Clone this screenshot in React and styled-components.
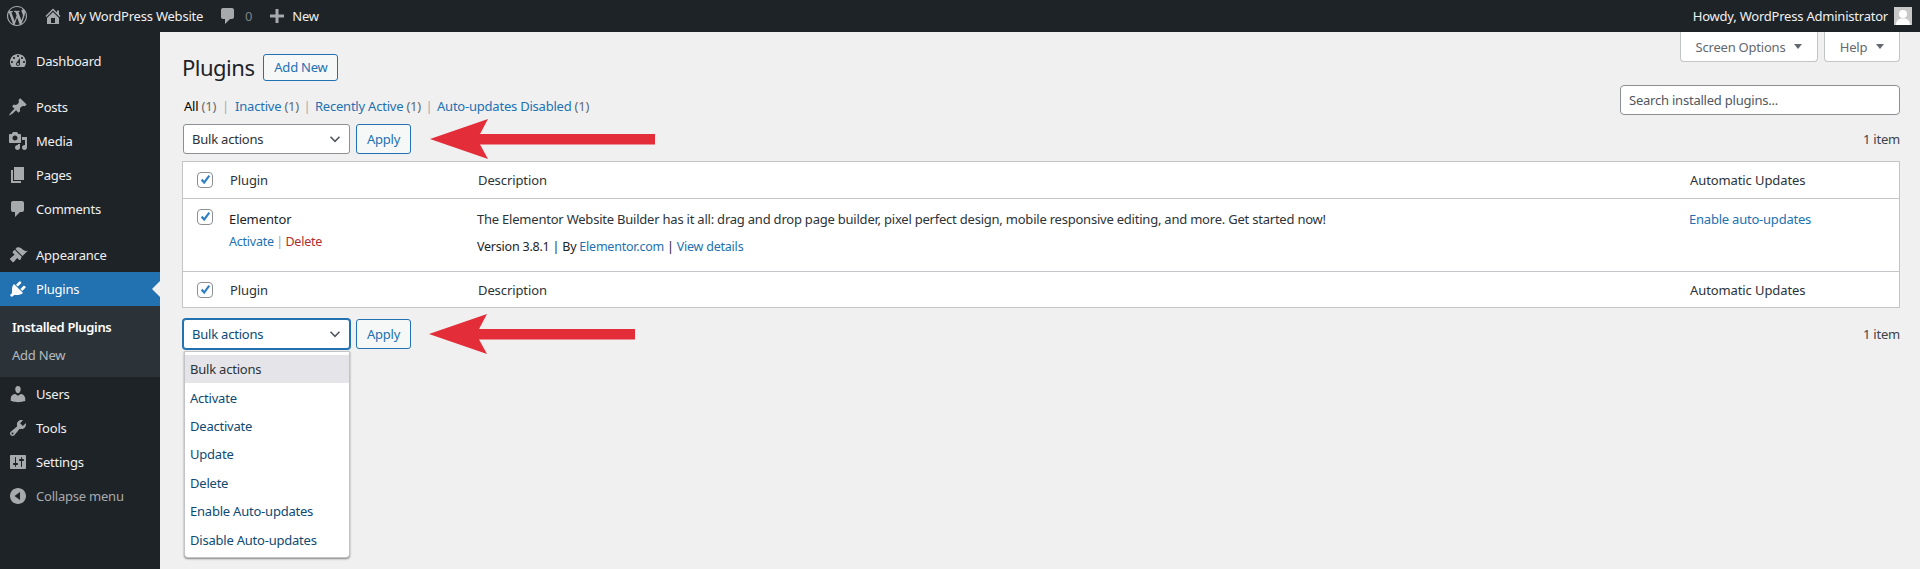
import React from 'react';
import styled, { createGlobalStyle } from 'styled-components';

const GlobalStyle = createGlobalStyle`
	* {
		box-sizing: border-box;
	}
	html, body {
		margin: 0;
		height: 100%;
		background: #f0f0f1;
		overflow: hidden;
	}
	body {
		font-family: "Noto Sans", "Open Sans", sans-serif;
		font-size: 13px;
		letter-spacing: -0.22px;
		color: #3c434a;
	}
`;

const ICONS = {
	wordpress: 'M20 10c0-5.51-4.49-10-10-10C4.48 0 0 4.49 0 10c0 5.52 4.48 10 10 10 5.51 0 10-4.48 10-10zM7.78 15.37L4.37 6.22c.55-.02 1.17-.08 1.17-.08.5-.06.44-1.13-.06-1.11 0 0-1.45.11-2.37.11-.18 0-.37 0-.58-.01C4.12 2.69 6.87 1.11 10 1.11c2.33 0 4.45.87 6.05 2.34-.68-.11-1.65.39-1.65 1.58 0 .74.45 1.36.9 2.1.35.61.55 1.36.55 2.46 0 1.49-1.4 5-1.4 5l-3.03-8.37c.54-.02.82-.17.82-.17.5-.05.44-1.25-.06-1.22 0 0-1.44.12-2.38.12-.87 0-2.33-.12-2.33-.12-.5-.03-.56 1.2-.06 1.22l.92.08 1.26 3.41zM17.41 10c.24-.64.74-1.87.43-4.25.7 1.29 1.05 2.71 1.05 4.25 0 3.29-1.73 6.24-4.4 7.78.97-2.59 1.94-5.2 2.92-7.78zM6.1 18.09C3.12 16.65 1.11 13.53 1.11 10c0-1.3.23-2.48.72-3.59C3.25 10.3 4.67 14.2 6.1 18.09zm4.03-6.63l2.58 6.98c-.86.29-1.76.45-2.71.45-.79 0-1.57-.11-2.29-.33.81-2.38 1.62-4.74 2.42-7.1z',
	home: 'M16 8.5l1.53 1.53-1.06 1.06L10 4.62l-6.47 6.47-1.06-1.06L10 2.5l4 4v-2h2v4zm-6-2.46l6 5.99V18H4v-5.97zM12 17v-5H8v5h4z',
	comment: 'M5 2h9c1.1 0 2 .9 2 2v7c0 1.1-.9 2-2 2h-2l-5 5v-5H5c-1.1 0-2-.9-2-2V4c0-1.1.9-2 2-2z',
	plus: 'M17 8.500v3h-5.500V17h-3v-5.500H3v-3h5.500V3h3v5.500z',
	dashboard: 'M3.76 16h12.48c1.1-1.37 1.76-3.11 1.76-5 0-4.42-3.58-8-8-8s-8 3.58-8 8c0 1.89.66 3.63 1.76 5zM10 4c.55 0 1 .45 1 1s-.45 1-1 1-1-.45-1-1 .45-1 1-1zM6 6c.55 0 1 .45 1 1s-.45 1-1 1-1-.45-1-1 .45-1 1-1zm8 0c.55 0 1 .45 1 1s-.45 1-1 1-1-.45-1-1 .45-1 1-1zm-5.37 5.55L12 7v6c0 1.1-.9 2-2 2s-2-.9-2-2c0-.57.24-1.08.63-1.45zM4 10c.55 0 1 .45 1 1s-.45 1-1 1-1-.45-1-1 .45-1 1-1zm12 0c.55 0 1 .45 1 1s-.45 1-1 1-1-.45-1-1 .45-1 1-1zm-5 3c0-.55-.45-1-1-1s-1 .45-1 1 .45 1 1 1 1-.45 1-1z',
	post: 'M10.44 3.02l1.82-1.82 6.36 6.35-1.83 1.82c-1.05-.68-2.48-.57-3.41.36l-.75.75c-.92.93-1.04 2.35-.35 3.41l-1.83 1.82-2.41-2.41-2.8 2.79c-.42.42-3.38 2.71-3.8 2.29s1.86-3.39 2.28-3.81l2.79-2.79L4.1 9.36l1.83-1.82c1.05.69 2.48.57 3.4-.36l.75-.75c.93-.92 1.05-2.35.36-3.41z',
	media: 'M13 11V4c0-.55-.45-1-1-1h-1.67L9 1H5L3.67 3H2c-.55 0-1 .45-1 1v7c0 .55.45 1 1 1h10c.55 0 1-.45 1-1zM7 4.5c1.38 0 2.5 1.12 2.5 2.5S8.38 9.5 7 9.5 4.5 8.38 4.5 7 5.62 4.5 7 4.5zM14 6h5v10.5c0 1.38-1.12 2.5-2.5 2.5S14 17.88 14 16.5s1.12-2.5 2.5-2.5c.17 0 .34.02.5.05V9h-3V6zm-4 8.05V13h2v3.5c0 1.38-1.12 2.5-2.5 2.5S7 17.88 7 16.5 8.12 14 9.5 14c.17 0 .34.02.5.05z',
	page: 'M6 15V2h10v13H6zm-1 1h8v2H3V5h2v11z',
	appearance: 'M14.48 11.06L7.41 3.99l1.5-1.5c.5-.56 2.3-.47 3.51.32 1.21.8 1.43 1.28 2.91 2.1 1.18.64 2.45 1.26 4.45.85zm-.71.71L6.7 4.7 4.93 6.47c-.39.39-.39 1.02 0 1.41l1.06 1.06c.39.39.39 1.03 0 1.42-.6.6-1.43 1.11-2.21 1.69-.35.26-.7.53-1.01.84C1.43 13.23 1.57 14.49 3 15.5c.99.69 1.74 2.04 1.74 2.04s.98-.38 1.27-.67c.31-.31.58-.66.84-1.01.58-.78 1.09-1.61 1.69-2.21.39-.39 1.02-.39 1.41 0l1.06 1.06c.39.39 1.02.39 1.41 0z',
	plugins: 'M13.11 4.36L9.87 7.6 8 5.73l3.24-3.24c.35-.34 1.05-.2 1.56.32.52.51.66 1.21.31 1.55zm-8 1.77l.91-1.12 9.01 9.01-1.19.84c-.71.71-2.63 1.16-3.82 1.16H6.14L4.9 17.26c-.59.59-1.54.59-2.12 0-.59-.58-.59-1.53 0-2.12l1.24-1.24v-3.88c0-1.13.4-3.19 1.09-3.89zm7.26 3.97l3.24-3.24c.34-.35 1.04-.21 1.55.31.52.51.66 1.21.31 1.55l-3.24 3.25z',
	users: 'M10 9.25c-2.27 0-2.73-3.44-2.73-3.44C7 4.02 7.82 2 9.97 2c2.16 0 2.98 2.02 2.71 3.81 0 0-.41 3.44-2.68 3.44zm0 2.57L12.72 10c2.39 0 4.52 2.33 4.52 4.53v2.49s-3.65 1.13-7.24 1.13c-3.65 0-7.24-1.13-7.24-1.13v-2.49c0-2.25 1.94-4.48 4.47-4.48z',
	tools: 'M16.68 9.77c-1.34 1.34-3.3 1.67-4.95.99l-5.41 6.52c-.99.99-2.59.99-3.58 0s-.99-2.59 0-3.57l6.52-5.42c-.68-1.65-.35-3.61.99-4.95 1.28-1.28 3.12-1.62 4.72-1.06l-2.89 2.89 2.82 2.82 2.86-2.87c.53 1.58.18 3.39-1.08 4.65zM3.81 16.21c.4.39 1.04.39 1.43 0 .4-.4.4-1.04 0-1.43-.39-.4-1.03-.4-1.43 0-.39.39-.39 1.03 0 1.43z',
	settings: 'M18 16V4c0-.55-.45-1-1-1H3c-.55 0-1 .45-1 1v12c0 .55.45 1 1 1h14c.55 0 1-.45 1-1zM8 11h1c.55 0 1 .45 1 1s-.45 1-1 1H8v1.5c0 .28-.22.5-.5.5s-.5-.22-.5-.5V13H6c-.55 0-1-.45-1-1s.45-1 1-1h1V5.5c0-.28.22-.5.5-.5s.5.22.5.5V11zm5-2h-1c-.55 0-1-.45-1-1s.45-1 1-1h1V5.5c0-.28.22-.5.5-.5s.5.22.5.5V7h1c.55 0 1 .45 1 1s-.45 1-1 1h-1v5.5c0 .28-.22.5-.5.5s-.5-.22-.5-.5V9z',
	collapse: 'M10 2c-4.42 0-8 3.58-8 8s3.58 8 8 8 8-3.58 8-8-3.58-8-8-8zm2 4v8L6.5 10z',
};

const Icon = ( { name, size = 20, color } ) => (
	<svg width={ size } height={ size } viewBox="0 0 20 20" fill={ color || 'currentColor' } fillRule="evenodd" style={ { flex: 'none' } }>
		<path d={ ICONS[ name ] } />
	</svg>
);

const Page = styled.div`
	display: flex;
	flex-direction: column;
	height: 569px;
	width: 1920px;
`;

const AdminBar = styled.header`
	display: flex;
	align-items: center;
	height: 32px;
	flex: none;
	background: #1d2327;
	color: #f0f0f1;
	padding: 0 8px 0 7px;
`;

const BarItem = styled.span`
	display: flex;
	align-items: center;
	gap: ${ ( p ) => p.$gap || 7 }px;
	margin-left: ${ ( p ) => p.$left || 0 }px;
	color: #f0f0f1;
	svg {
		color: #a7aaad;
	}
`;

const BarCount = styled.span`
	color: #a7aaad;
	opacity: .7;
`;

const Howdy = styled.span`
	margin-left: auto;
	display: flex;
	align-items: center;
	gap: 6px;
`;

const Avatar = styled.span`
	display: block;
	width: 18px;
	height: 18px;
	background: #c8c8c8;
	overflow: hidden;
	svg {
		display: block;
	}
`;

const Body = styled.div`
	display: flex;
	flex: 1;
	min-height: 0;
`;

const Sidebar = styled.nav`
	width: 160px;
	flex: none;
	background: #1d2327;
	padding-top: 12px;
`;

const MenuItem = styled.div`
	position: relative;
	display: flex;
	align-items: center;
	height: 34px;
	padding-left: 8px;
	gap: 8px;
	margin-top: ${ ( p ) => p.$gap || 0 }px;
	color: ${ ( p ) => ( p.$muted ? '#a7aaad' : '#f0f0f1' ) };
	background: ${ ( p ) => ( p.$active ? '#2271b1' : 'transparent' ) };
	svg {
		color: ${ ( p ) => ( p.$active ? '#fff' : '#a7aaad' ) };
	}
	${ ( p ) => p.$active && `
		color: #fff;
		&::after {
			content: '';
			position: absolute;
			right: 0;
			top: 50%;
			margin-top: -8px;
			border: 8px solid transparent;
			border-right-color: #f0f0f1;
			border-left-width: 0;
		}
	` }
`;

const SubMenu = styled.div`
	background: #2c3338;
	padding: 7px 0 8px;
`;

const SubItem = styled.div`
	display: flex;
	align-items: center;
	height: 28px;
	padding-left: 12px;
	color: ${ ( p ) => ( p.$current ? '#fff' : 'rgba(240,246,252,.7)' ) };
	font-weight: ${ ( p ) => ( p.$current ? 600 : 400 ) };
	letter-spacing: ${ ( p ) => ( p.$current ? '-0.35px' : 'inherit' ) };
`;

const Content = styled.main`
	flex: 1;
	min-width: 0;
	padding: 0 20px 0 22px;
`;

const TopArea = styled.div`
	display: flex;
	justify-content: space-between;
	height: 92px;
`;

const TitleBlock = styled.div`
	padding-top: 21px;
`;

const TitleRow = styled.div`
	display: flex;
	align-items: center;
	gap: 9px;
	height: 28px;
`;

const Heading = styled.h1`
	margin: 0;
	font-size: 22px;
	font-weight: 400;
	line-height: 28px;
	color: #1d2327;
	letter-spacing: -0.5px;
`;

const OutlineButton = styled.button`
	display: inline-flex;
	align-items: center;
	justify-content: center;
	height: ${ ( p ) => p.$height || 30 }px;
	width: ${ ( p ) => p.$width }px;
	padding: 0;
	background: #f6f7f7;
	border: 1px solid #2271b1;
	border-radius: 3px;
	color: #2271b1;
	font: inherit;
	letter-spacing: inherit;
`;

const Filters = styled.div`
	display: flex;
	margin-top: 15px;
	padding-left: 2px;
	line-height: 20px;
	color: #646970;
	white-space: pre;
`;

const FilterCurrent = styled.strong`
	font-weight: 400;
	color: #000;
`;

const Link = styled.span`
	color: ${ ( p ) => p.$color || '#2271b1' };
`;

const Sep = styled.span`
	color: #a7aaad;
	margin: 0 ${ ( p ) => p.$space || 4.5 }px;
`;

const RightBlock = styled.div`
	display: flex;
	flex-direction: column;
	align-items: flex-end;
`;

const TabRow = styled.div`
	display: flex;
	gap: 6px;
`;

const Tab = styled.div`
	display: flex;
	align-items: center;
	justify-content: center;
	gap: 9px;
	height: 30px;
	width: ${ ( p ) => p.$width }px;
	background: #fff;
	border: 1px solid #c3c4c7;
	border-top: 0;
	border-radius: 0 0 4px 4px;
	color: #646970;
`;

const Caret = styled.i`
	display: block;
	border: 4px solid transparent;
	border-top: 5px solid #646970;
	border-bottom: 0;
`;

const SearchInput = styled.div`
	display: flex;
	align-items: center;
	width: 280px;
	height: 30px;
	margin-top: 23px;
	padding-left: 8px;
	background: #fff;
	border: 1px solid #8c8f94;
	border-radius: 4px;
	color: #50575e;
`;

const Toolbar = styled.div`
	position: relative;
	display: flex;
	align-items: center;
	height: 30px;
	padding-left: 1px;
	gap: 6px;
	margin-top: ${ ( p ) => p.$top || 0 }px;
`;

const SelectBox = styled.div`
	display: flex;
	align-items: center;
	justify-content: space-between;
	width: 167px;
	height: 30px;
	padding: 0 8px 0 8px;
	background: #fff;
	border: 1px solid ${ ( p ) => ( p.$focus ? '#2271b1' : '#8c8f94' ) };
	box-shadow: ${ ( p ) => ( p.$focus ? '0 0 0 1px #2271b1' : 'none' ) };
	border-radius: 3px;
	color: ${ ( p ) => ( p.$focus ? '#0a4b78' : '#2c3338' ) };
`;

const Arrow = styled.svg`
	display: block;
	flex: none;
	margin-left: ${ ( p ) => p.$left }px;
`;

const ItemCount = styled.span`
	margin-left: auto;
	color: #3c434a;
`;

const Dropdown = styled.div`
	position: absolute;
	z-index: 2;
	left: 2px;
	top: 32px;
	width: 166px;
	padding: 3px 0 3px;
	background: #fff;
	border: 1px solid #c3c4c7;
	border-radius: 0 0 4px 4px;
	box-shadow: 0 1px 2px rgba(0,0,0,.45);
`;

const DropItem = styled.div`
	display: flex;
	align-items: center;
	height: 28.4px;
	padding-left: 5px;
	background: ${ ( p ) => ( p.$selected ? '#e4e4e9' : 'transparent' ) };
	color: ${ ( p ) => ( p.$selected ? '#2c3338' : '#0f4a73' ) };
`;

const TableBox = styled.table`
	width: 1718px;
	margin-top: 7px;
	table-layout: fixed;
	border-collapse: separate;
	border-spacing: 0;
	background: #fff;
	border: 1px solid #c3c4c7;
`;

const HeadCell = styled.th`
	height: ${ ( p ) => p.$height || 36 }px;
	padding: 0 10px;
	text-align: left;
	font-weight: 400;
	letter-spacing: -0.1px;
	color: #2c3338;
	border-bottom: ${ ( p ) => ( p.$ruled ? '1px solid #c3c4c7' : '0' ) };
	border-top: ${ ( p ) => ( p.$capped ? '1px solid #c3c4c7' : '0' ) };
`;

const CheckCell = styled( HeadCell )`
	padding: 0 0 0 14px;
`;

const BodyCell = styled.td`
	vertical-align: top;
	height: 72px;
	padding: ${ ( p ) => ( p.$flush ? '10px 0 0 14px' : '11px 10px 0 9px' ) };
	line-height: 19px;
	color: #2c3338;
`;

const PluginName = styled.div`
	color: #1d2327;
	letter-spacing: -0.1px;
`;

const RowActions = styled.div`
	margin-top: 3px;
	color: #a7aaad;
	font-size: 12.5px;
	word-spacing: -0.6px;
`;

const MetaLine = styled.div`
	margin-top: 8px;
	font-size: 12.5px;
	color: #1d2327;
`;

const CheckBoxMark = styled.span`
	display: block;
	width: 16px;
	height: 16px;
	background: #fff;
	border: 1px solid #8c8f94;
	border-radius: 4px;
	svg {
		display: block;
		margin: -1px;
	}
`;

const Check = () => (
	<CheckBoxMark>
		<svg width="16" height="16" viewBox="0 0 16 16">
			<path d="M3.8 8.4l1.6-1.6 1.7 2L11.5 3l1.6 1.2-5.8 8z" fill="#2f7fc4" />
		</svg>
	</CheckBoxMark>
);

const Chevron = () => (
	<svg width="12" height="12" viewBox="0 0 12 12" fill="none" stroke="#50575e" strokeWidth="1.6">
		<path d="M1.5 3.8L6 8.3l4.5-4.5" />
	</svg>
);

const RedArrow = ( { length, left } ) => (
	<Arrow $left={ left } width={ length } height="40" viewBox={ `0 0 ${ length } 40` }>
		<path fill="#e32d38" d={ `M0 20 L58 0 L50 15 H${ length } V25.5 H50 L58 40 Z` } />
	</Arrow>
);

const menuTop = [
	[ 'dashboard', 'Dashboard', 0 ],
	[ 'post', 'Posts', 12 ],
	[ 'media', 'Media', 0 ],
	[ 'page', 'Pages', 0 ],
	[ 'comment', 'Comments', 0 ],
	[ 'appearance', 'Appearance', 12 ],
];

const menuBottom = [
	[ 'users', 'Users' ],
	[ 'tools', 'Tools' ],
	[ 'settings', 'Settings' ],
];

const bulkActions = [ 'Activate', 'Deactivate', 'Update', 'Delete', 'Enable Auto-updates', 'Disable Auto-updates' ];

const HeaderRow = ( { height, ruled, capped } ) => (
	<tr>
		<CheckCell $height={ height } $ruled={ ruled } $capped={ capped }><Check /></CheckCell>
		<HeadCell $height={ height } $ruled={ ruled } $capped={ capped }>Plugin</HeadCell>
		<HeadCell $height={ height } $ruled={ ruled } $capped={ capped }>Description</HeadCell>
		<HeadCell $height={ height } $ruled={ ruled } $capped={ capped }>Automatic Updates</HeadCell>
	</tr>
);

const App = () => (
	<Page>
		<GlobalStyle />
		<AdminBar>
			<BarItem><Icon name="wordpress" size={ 20 } /></BarItem>
			<BarItem $left={ 16 } $gap={ 5 }><Icon name="home" size={ 20 } />My WordPress Website</BarItem>
			<BarItem $left={ 15 } $gap={ 7 }><Icon name="comment" size={ 20 } /><BarCount>0</BarCount></BarItem>
			<BarItem $left={ 15 } $gap={ 5 }><Icon name="plus" size={ 20 } />New</BarItem>
			<Howdy>
				Howdy, WordPress Administrator
				<Avatar>
					<svg width="18" height="18" viewBox="0 0 18 18">
						<circle cx="9" cy="7" r="4" fill="#fff" />
						<path d="M2 18c0-5 3-6.500 7-6.500s7 1.500 7 6.500z" fill="#fff" />
					</svg>
				</Avatar>
			</Howdy>
		</AdminBar>
		<Body>
			<Sidebar>
				{ menuTop.map( ( [ icon, label, gap ] ) => (
					<MenuItem key={ label } $gap={ gap }><Icon name={ icon } />{ label }</MenuItem>
				) ) }
				<MenuItem $active><Icon name="plugins" />Plugins</MenuItem>
				<SubMenu>
					<SubItem $current>Installed Plugins</SubItem>
					<SubItem>Add New</SubItem>
				</SubMenu>
				{ menuBottom.map( ( [ icon, label ] ) => (
					<MenuItem key={ label }><Icon name={ icon } />{ label }</MenuItem>
				) ) }
				<MenuItem $muted><Icon name="collapse" />Collapse menu</MenuItem>
			</Sidebar>
			<Content>
				<TopArea>
					<TitleBlock>
						<TitleRow>
							<Heading>Plugins</Heading>
							<OutlineButton $width={ 75 } $height={ 27 }>Add New</OutlineButton>
						</TitleRow>
						<Filters>
							<FilterCurrent>All</FilterCurrent> (1)<Sep $space={ 6 }>|</Sep>
							<Link>Inactive</Link> (1)<Sep $space={ 4.5 }>|</Sep>
							<Link>Recently Active</Link> (1)<Sep $space={ 4.5 }>|</Sep>
							<Link>Auto-updates Disabled</Link> (1)
						</Filters>
					</TitleBlock>
					<RightBlock>
						<TabRow>
							<Tab $width={ 138 }>Screen Options<Caret /></Tab>
							<Tab $width={ 76 }>Help<Caret /></Tab>
						</TabRow>
						<SearchInput>Search installed plugins...</SearchInput>
					</RightBlock>
				</TopArea>
				<Toolbar>
					<SelectBox>Bulk actions<Chevron /></SelectBox>
					<OutlineButton $width={ 55 }>Apply</OutlineButton>
					<RedArrow length={ 225 } left={ 13 } />
					<ItemCount>1 item</ItemCount>
				</Toolbar>
				<TableBox>
					<colgroup>
						<col style={ { width: 37 } } />
						<col style={ { width: 248 } } />
						<col />
						<col style={ { width: 219 } } />
					</colgroup>
					<thead>
						<HeaderRow height={ 37 } ruled />
					</thead>
					<tbody>
						<tr>
							<BodyCell $flush><Check /></BodyCell>
							<BodyCell>
								<PluginName>Elementor</PluginName>
								<RowActions>
									<Link>Activate</Link> | <Link $color="#b32d2e">Delete</Link>
								</RowActions>
							</BodyCell>
							<BodyCell>
								The Elementor Website Builder has it all: drag and drop page builder, pixel perfect design, mobile responsive editing, and more. Get started now!
								<MetaLine>
									Version 3.8.1 | By <Link>Elementor.com</Link> | <Link>View details</Link>
								</MetaLine>
							</BodyCell>
							<BodyCell><Link>Enable auto-updates</Link></BodyCell>
						</tr>
					</tbody>
					<tfoot>
						<HeaderRow height={ 36 } capped />
					</tfoot>
				</TableBox>
				<Toolbar $top={ 11 }>
					<SelectBox $focus>Bulk actions<Chevron /></SelectBox>
					<OutlineButton $width={ 55 }>Apply</OutlineButton>
					<RedArrow length={ 206 } left={ 12 } />
					<ItemCount>1 item</ItemCount>
					<Dropdown>
						<DropItem $selected>Bulk actions</DropItem>
						{ bulkActions.map( ( action ) => (
							<DropItem key={ action }>{ action }</DropItem>
						) ) }
					</Dropdown>
				</Toolbar>
			</Content>
		</Body>
	</Page>
);

export default App;
